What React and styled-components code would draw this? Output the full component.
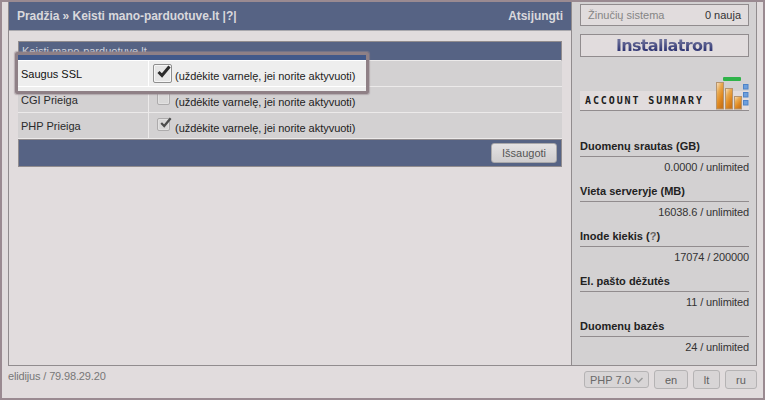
import React from 'react';
import styled, { createGlobalStyle } from 'styled-components';

const GlobalStyle = createGlobalStyle`
  html, body { margin: 0; padding: 0; background: #e1dcdd; }
  body { font-family: "Liberation Sans", Arial, sans-serif; font-size: 11px; color: #222; }
`;

const Frame = styled.div`
  box-sizing: border-box;
  width: 765px;
  height: 400px;
  border: 2px solid #9a8a91;
  background: #e1dcdd;
  padding: 0 6px;
  overflow: hidden;
`;

const Main = styled.div`
  display: flex;
  height: 364px;
  border: 1px solid #918c8e;
  border-top: 0;
  box-sizing: border-box;
`;

const Content = styled.div`
  width: 562px;
  flex: none;
`;

const TopBar = styled.div`
  box-sizing: border-box;
  height: 29px;
  background: #566384;
  border-bottom: 1px solid #a9a8ad;
  color: #d9d8dc;
  font-size: 12px;
  font-weight: bold;
  letter-spacing: -0.05px;
  display: flex;
  align-items: center;
  justify-content: space-between;
  padding: 0 8px;
`;

const Card = styled.div`
  margin: 10px 9px 0;
`;

const CardTitle = styled.div`
  box-sizing: border-box;
  height: 20px;
  background: #566384;
  border: 1px solid #918c8e;
  border-bottom-color: #eceaea;
  color: #cfd2dc;
  font-size: 11px;
  line-height: 18px;
  padding-left: 3px;
`;

const Row = styled.div`
  display: grid;
  grid-template-columns: 131px 1fr;
  height: 26px;
  position: relative;
  background: #d3d1d2;
  border-bottom: 1px solid #eceaea;
  box-sizing: border-box;
`;

const Label = styled.div`
  display: flex;
  align-items: center;
  padding-left: 3px;
  color: #2a2a2a;
  font-size: 11px;
  border-right: 1px solid #eceaea;
`;

const OptionCell = styled.div`
  display: flex;
  align-items: flex-start;
  padding: ${(p) => (p.$lit ? '3px 0 0 4px' : '5px 0 0 8px')};
  gap: ${(p) => (p.$lit ? '3px' : '5px')};
`;

const Hint = styled.span`
  font-size: 11px;
  color: #222;
  letter-spacing: -0.03px;
  margin-top: ${(p) => (p.$lit ? '6px' : '4px')};
  line-height: 13px;
`;

const Box = styled.span`
  position: relative;
  display: block;
  flex: none;
  box-sizing: border-box;
  width: ${(p) => p.$size}px;
  height: ${(p) => p.$size}px;
  border: 1px solid ${(p) => (p.$lit ? '#8f8f8f' : '#adabac')};
  border-radius: 2px;
  background: ${(p) => (p.$lit ? '#e6e6e6' : '#d9d8d8')};
  box-shadow: inset 0 0 0 1px ${(p) => (p.$lit ? '#f6f6f6' : '#e2e1e1')};
`;

const Tick = styled.svg`
  position: absolute;
  left: ${(p) => (p.$lit ? '2px' : '0')};
  top: ${(p) => (p.$lit ? '0' : '-2px')};
`;

const Spotlight = styled.div`
  position: absolute;
  left: -3px;
  top: -9px;
  width: 354px;
  height: 42px;
  box-sizing: border-box;
  border: 3px solid #8f8086;
  border-radius: 2px;
  background: linear-gradient(#42598a 5px, #eeeeee 5px);
  box-shadow: 0 0 1px 1px rgba(150, 135, 142, 0.55);
  padding-top: 5px;
  z-index: 2;
`;

const SpotRow = styled.div`
  display: grid;
  grid-template-columns: 131px 1fr;
  height: 25px;
  border-top: 1px solid #fff;
  border-bottom: 1px solid #fff;
  box-sizing: content-box;

  ${Label} { border-right: 1px solid #fff; color: #111; }
`;

const ActionBar = styled.div`
  box-sizing: border-box;
  height: 28px;
  background: #566384;
  border: 1px solid #918c8e;
  display: flex;
  align-items: center;
  justify-content: flex-end;
  padding-right: 4px;
`;

const SaveButton = styled.button`
  width: 66px;
  height: 20px;
  padding: 0;
  border: 1px solid #a9a8aa;
  border-radius: 3px;
  background: linear-gradient(#e4e2e3, #cfcdce);
  color: #555;
  font: 11px "Liberation Sans", Arial, sans-serif;
`;

const Sidebar = styled.aside`
  flex: 1;
  min-width: 0;
  background: #d3d1d2;
  border-left: 1px solid #918c8e;
  padding: 2px 7px 0 8px;
`;

const MessageBox = styled.div`
  box-sizing: border-box;
  height: 22px;
  border: 1px solid #918c8e;
  background: #e1dcdd;
  display: flex;
  align-items: center;
  justify-content: space-between;
  padding: 0 7px;
  color: #333;
`;

const MessageLink = styled.span`
  color: #858585;
`;

const LogoBox = styled.div`
  box-sizing: border-box;
  height: 23px;
  margin-top: 8px;
  border: 1px solid #918c8e;
  background: #e1dcdd;
  display: flex;
  align-items: center;
  justify-content: center;
`;

const LogoText = styled.span`
  font: bold 16px "DejaVu Sans", sans-serif;
  letter-spacing: -0.65px;
  background: linear-gradient(#6a6e98 25%, #2d3372 80%);
  -webkit-background-clip: text;
  background-clip: text;
  color: transparent;
`;

const Summary = styled.div`
  position: relative;
  height: 20px;
  margin-top: 34px;
  background: #e1dcdd;
  border-bottom: 1px solid #918c8e;
  box-sizing: border-box;
  display: flex;
  align-items: center;
  padding-left: 5px;
`;

const SummaryText = styled.span`
  font: bold 10px "DejaVu Sans Mono", monospace;
  letter-spacing: 1.9px;
  color: #1c1c1c;
`;

const SummaryArt = styled.svg`
  position: absolute;
  right: 0;
  bottom: 0;
`;

const Stats = styled.div`
  margin-top: 28px;
`;

const Stat = styled.div`
  height: 45px;
`;

const StatTitle = styled.div`
  height: 18px;
  line-height: 15px;
  box-sizing: border-box;
  border-bottom: 1px solid #918c8e;
  font-weight: bold;
  color: #222;
`;

const StatValue = styled.div`
  text-align: right;
  line-height: 21px;
  letter-spacing: -0.12px;
  color: #333;
`;

const Help = styled.span`
  color: #666;
`;

const Footer = styled.div`
  display: flex;
  align-items: flex-start;
  justify-content: space-between;
  padding-top: 4px;
`;

const UserInfo = styled.span`
  color: #777;
  line-height: 12px;
  letter-spacing: -0.15px;
`;

const Controls = styled.div`
  display: flex;
  gap: 5px;
`;

const PhpSelect = styled.div`
  box-sizing: border-box;
  width: 65px;
  height: 17px;
  margin-top: 1px;
  border: 1px solid #b5b3b4;
  border-radius: 3px;
  background: #d8d5d6;
  color: #6a6a6a;
  display: flex;
  align-items: center;
  justify-content: space-between;
  padding: 0 5px;
`;

const LangButton = styled.button`
  box-sizing: border-box;
  width: ${(p) => p.$w}px;
  height: 19px;
  padding: 0;
  border: 1px solid #b5b3b4;
  border-radius: 3px;
  background: #d8d5d6;
  color: #5f5f5f;
  font: 11px "Liberation Sans", Arial, sans-serif;
`;

const stats = [
  { title: 'Duomenų srautas (GB)', value: '0.0000 / unlimited' },
  { title: 'Vieta serveryje (MB)', value: '16038.6 / unlimited' },
  { title: <>Inode kiekis (<Help>?</Help>)</>, value: '17074 / 200000' },
  { title: 'El. pašto dėžutės', value: '11 / unlimited' },
  { title: 'Duomenų bazės', value: '24 / unlimited' },
];

const hint = '(uždėkite varnelę, jei norite aktyvuoti)';

function Check({ checked, lit }) {
  return (
    <Box $size={lit ? 19 : 13} $lit={lit}>
      {checked && (
        <Tick $lit={lit} width={15} height={lit ? 14 : 12} viewBox="0 0 15 14" fill="none">
          <path
            d="M2.5 7 L6 10.5 L13.5 1.5"
            stroke={lit ? '#2b2b2b' : '#4c4c4c'}
            strokeWidth={lit ? 3 : 2.6}
          />
        </Tick>
      )}
    </Box>
  );
}

function SummaryBars() {
  return (
    <SummaryArt width="36" height="36" viewBox="0 0 36 36">
      <defs>
        <linearGradient id="bar" x1="0" x2="0.6" y1="0" y2="1">
          <stop offset="0" stopColor="#f6e4cc" />
          <stop offset="0.38" stopColor="#e9a94f" />
          <stop offset="0.7" stopColor="#e08a22" />
          <stop offset="1" stopColor="#c9741b" />
        </linearGradient>
      </defs>
      <rect x="10" y="3" width="18" height="4" rx="1" fill="#2fb34a" />
      <rect x="3.5" y="8.5" width="7" height="26.5" fill="url(#bar)" stroke="#b5946f" />
      <rect x="12.5" y="14.5" width="7" height="20.5" fill="url(#bar)" stroke="#b5946f" />
      <rect x="21.5" y="22.5" width="7" height="12.5" fill="url(#bar)" stroke="#b5946f" />
      <rect x="30.5" y="10.5" width="4.5" height="4.5" fill="#6d9fdc" stroke="#4f83c8" />
      <rect x="30.5" y="18.5" width="4.5" height="4.5" fill="#6d9fdc" stroke="#4f83c8" />
      <rect x="30.5" y="26.5" width="4.5" height="4.5" fill="#6d9fdc" stroke="#4f83c8" />
    </SummaryArt>
  );
}

export default function App() {
  return (
    <>
      <GlobalStyle />
      <Frame>
        <Main>
          <Content>
            <TopBar>
              <span>Pradžia » Keisti mano-parduotuve.lt |?|</span>
              <span>Atsijungti</span>
            </TopBar>
            <Card>
              <CardTitle>Keisti mano-parduotuve.lt</CardTitle>
              <Row>
                <Label />
                <OptionCell />
                <Spotlight>
                  <SpotRow>
                    <Label>Saugus SSL</Label>
                    <OptionCell $lit>
                      <Check checked lit />
                      <Hint $lit>{hint}</Hint>
                    </OptionCell>
                  </SpotRow>
                </Spotlight>
              </Row>
              <Row>
                <Label>CGI Prieiga</Label>
                <OptionCell>
                  <Check />
                  <Hint>{hint}</Hint>
                </OptionCell>
              </Row>
              <Row>
                <Label>PHP Prieiga</Label>
                <OptionCell>
                  <Check checked />
                  <Hint>{hint}</Hint>
                </OptionCell>
              </Row>
              <ActionBar>
                <SaveButton>Išsaugoti</SaveButton>
              </ActionBar>
            </Card>
          </Content>
          <Sidebar>
            <MessageBox>
              <MessageLink>Žinučių sistema</MessageLink>
              <span>0 nauja</span>
            </MessageBox>
            <LogoBox>
              <LogoText>Installatron</LogoText>
            </LogoBox>
            <Summary>
              <SummaryText>ACCOUNT SUMMARY</SummaryText>
              <SummaryBars />
            </Summary>
            <Stats>
              {stats.map((s, i) => (
                <Stat key={i}>
                  <StatTitle>{s.title}</StatTitle>
                  <StatValue>{s.value}</StatValue>
                </Stat>
              ))}
            </Stats>
          </Sidebar>
        </Main>
        <Footer>
          <UserInfo>elidijus / 79.98.29.20</UserInfo>
          <Controls>
            <PhpSelect>
              <span>PHP 7.0</span>
              <svg width="9" height="6" viewBox="0 0 9 6" fill="none">
                <path d="M0.5 1 L4.5 5 L8.5 1" stroke="#999" strokeWidth="1.5" />
              </svg>
            </PhpSelect>
            <LangButton $w={34}>en</LangButton>
            <LangButton $w={27}>lt</LangButton>
            <LangButton $w={32}>ru</LangButton>
          </Controls>
        </Footer>
      </Frame>
    </>
  );
}
